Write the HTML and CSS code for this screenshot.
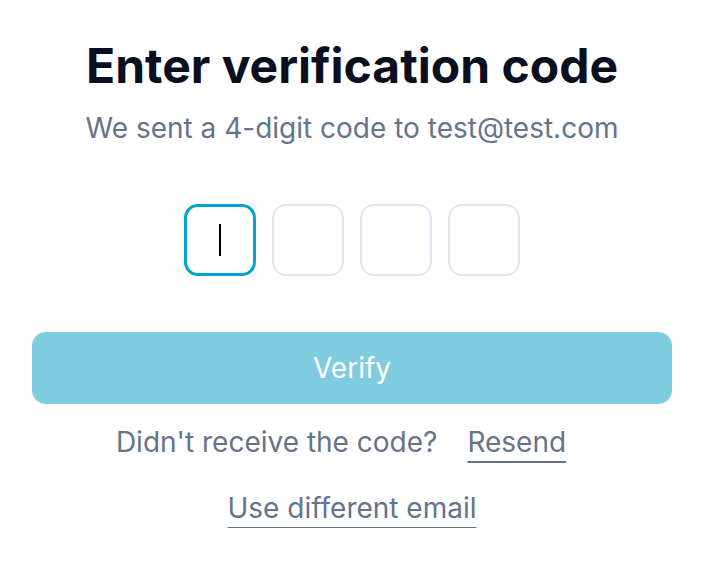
FILE: index.html
```html
<!DOCTYPE html>
<html lang="en">
<head>
<meta charset="UTF-8">
<meta name="viewport" content="width=device-width, initial-scale=1.0">
<title>Verify Code</title>
<link rel="stylesheet" href="styles.css">
</head>
<body>
<div class="verify-container">
  <h1>Enter verification code</h1>
  <p class="subtitle">We sent a 4-digit code to test@test.com</p>
  <div class="code-row">
    <div class="code-box active"><span class="caret"></span></div>
    <div class="code-box"></div>
    <div class="code-box"></div>
    <div class="code-box"></div>
  </div>
  <button class="verify-btn" type="button">Verify</button>
  <div class="resend-row">
    <span>Didn't receive the code?</span>
    <a href="#" class="link resend">Resend</a>
  </div>
  <div class="email-row">
    <a href="#" class="link">Use different email</a>
  </div>
</div>
</body>
</html>
```

FILE: styles.css
```css
body {
  margin: 0;
  padding: 0;
  font-family: Inter, "Noto Sans", sans-serif;
  background-color: #ffffff;
}

.verify-container {
  padding: 38px 32px 0;
  display: flex;
  flex-direction: column;
  align-items: center;
}

h1 {
  margin: 0;
  font-size: 48px;
  font-weight: 700;
  line-height: 56px;
  color: #0a0f1f;
}

.subtitle {
  margin: 14px 0 0;
  font-size: 28px;
  line-height: 40px;
  color: #64748b;
}

.code-row {
  display: flex;
  gap: 16px;
  margin-top: 56px;
}

.code-box {
  width: 72px;
  height: 72px;
  border: 2px solid #e2e8f0;
  border-radius: 14px;
  box-sizing: border-box;
  display: flex;
  align-items: center;
  justify-content: center;
}

.code-box.active {
  border: 3px solid #05a3d3;
}

.caret {
  width: 2px;
  height: 32px;
  background-color: #000;
}

.verify-btn {
  margin-top: 56px;
  width: 100%;
  height: 72px;
  border: none;
  border-radius: 14px;
  background-color: #7fcce0;
  color: #ffffff;
  font-family: inherit;
  font-size: 28px;
  font-weight: 400;
  cursor: pointer;
}

.resend-row {
  margin-top: 18px;
  display: flex;
  gap: 8px;
  font-size: 28px;
  line-height: 40px;
  color: #64748b;
}

.email-row {
  margin-top: 26px;
  font-size: 28px;
  line-height: 40px;
}

.link {
  color: #64748b;
  text-decoration: underline;
  text-decoration-thickness: 2px;
  text-underline-offset: 9px;
}

.resend {
  padding: 0 22px;
}
```
